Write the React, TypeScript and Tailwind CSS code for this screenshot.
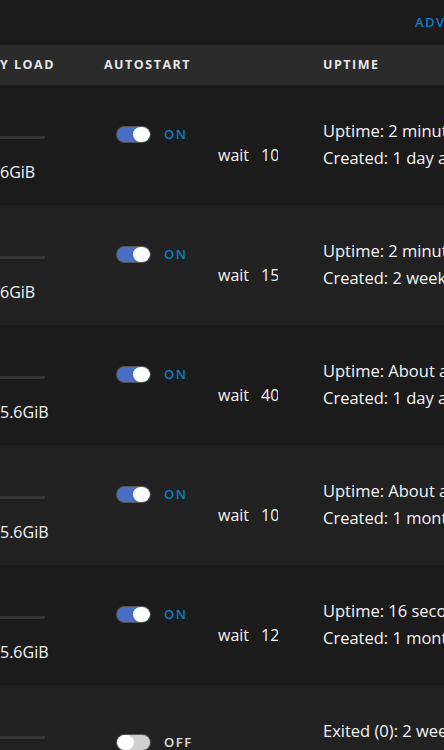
import { useState } from 'react';

type Container = {
  id: string;
  memory: string;
  autostart: boolean;
  wait?: string;
  uptime: string;
  created?: string;
};

const CONTAINERS: Container[] = [
  { id: 'c1', memory: '6GiB', autostart: true, wait: '10', uptime: 'Uptime: 2 minutes ago', created: 'Created: 1 day ago' },
  { id: 'c2', memory: '6GiB', autostart: true, wait: '15', uptime: 'Uptime: 2 minutes ago', created: 'Created: 2 weeks ago' },
  { id: 'c3', memory: '5.6GiB', autostart: true, wait: '40', uptime: 'Uptime: About a minute ago', created: 'Created: 1 day ago' },
  { id: 'c4', memory: '5.6GiB', autostart: true, wait: '10', uptime: 'Uptime: About a minute ago', created: 'Created: 1 month ago' },
  { id: 'c5', memory: '5.6GiB', autostart: true, wait: '12', uptime: 'Uptime: 16 seconds ago', created: 'Created: 1 month ago' },
  { id: 'c6', memory: '5.6GiB', autostart: false, uptime: 'Exited (0): 2 weeks ago' },
];

const FONT = { fontFamily: '"Open Sans", "Noto Sans", Arial, sans-serif' };

function Toggle({ on, onClick }: { on: boolean; onClick: () => void }) {
  return (
    <button
      onClick={onClick}
      className={`relative w-[33px] h-[15px] rounded-full shadow-[0_0_0_1px_rgba(120,120,120,0.6)] overflow-hidden ${
        on ? 'bg-[#4a6fc2]' : 'bg-[#cfcfcf]'
      }`}
    >
      <span
        className={`absolute top-0 h-[15px] w-[17px] rounded-full bg-white ${on ? 'right-0' : 'left-0'}`}
      />
    </button>
  );
}

export default function App() {
  const [rows, setRows] = useState(CONTAINERS);

  function flip(id: string) {
    setRows((rs) => rs.map((r) => (r.id === id ? { ...r, autostart: !r.autostart } : r)));
  }

  return (
    <div className="w-[444px] h-[750px] overflow-hidden bg-[#1c1b1c] text-[#f4f4f4]" style={FONT}>
      {/* top bar, view switch runs past the right edge */}
      <div className="h-[45px] flex pl-[415px] pt-[13px] overflow-hidden">
        <span className="whitespace-nowrap text-[13px] font-semibold tracking-[1.5px] text-[#0b7dc3]">
          ADVANCED VIEW
        </span>
      </div>

      {/* column headers */}
      <div className="h-[40px] bg-[#2b2b2b] grid grid-cols-[104px_219px_1fr] items-center text-[12.5px] font-bold tracking-[1.5px] text-[#e6e6e6] whitespace-nowrap">
        <span>Y LOAD</span>
        <span>AUTOSTART</span>
        <span>UPTIME</span>
      </div>

      {rows.map((r, i) => (
        <div
          key={r.id}
          className={`h-[120px] grid grid-cols-[104px_219px_1fr] whitespace-nowrap ${
            i % 2 === 0 ? 'bg-[#1c1b1c]' : 'bg-[#212121]'
          }`}
        >
          {/* memory load */}
          <div className="pt-[51px]">
            <div className="w-[45px] h-[3px] bg-[#363636]" />
            <div className="mt-[23px] text-[16px] leading-[20px]">{r.memory}</div>
          </div>

          {/* autostart + wait */}
          <div className={`flex items-start ${r.autostart ? 'pt-[42px]' : 'pt-[50px]'}`}>
            <div className="flex items-center pl-[13px] w-[114px]">
              <Toggle on={r.autostart} onClick={() => flip(r.id)} />
              <span
                className={`ml-[14px] text-[13px] font-semibold tracking-[1.5px] leading-[15px] ${
                  r.autostart ? 'text-[#0b7dc3]' : 'text-[#e0e0e0]'
                }`}
              >
                {r.autostart ? 'ON' : 'OFF'}
              </span>
            </div>
            {r.wait && (
              <div className="mt-[18px] flex text-[16px] leading-[20px]">
                <span>wait</span>
                <span className="ml-[12px] w-[17px] overflow-hidden">{r.wait}</span>
              </div>
            )}
          </div>

          {/* uptime */}
          <div className="pt-[32px] text-[16.5px] leading-[27px] overflow-hidden">
            <div>{r.uptime}</div>
            {r.created && <div>{r.created}</div>}
          </div>
        </div>
      ))}
    </div>
  );
}
